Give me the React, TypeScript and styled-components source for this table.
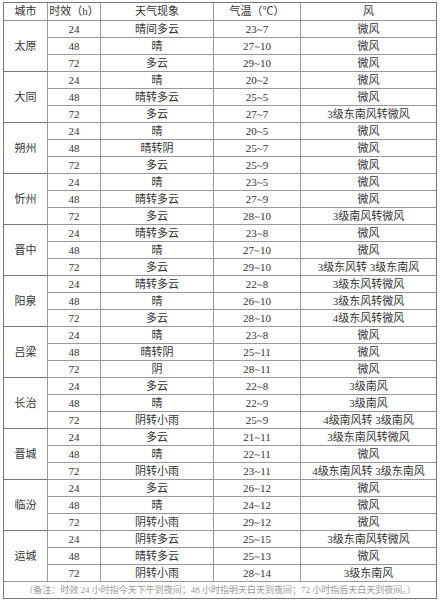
import React from 'react';
import styled, { createGlobalStyle } from 'styled-components';

const GlobalStyle = createGlobalStyle`
	body {
		margin: 0;
		background: #fff;
	}
`;

const Page = styled.div`
	padding: 2px 0 0 3px;
	font-family: "Liberation Serif", "Noto Sans CJK SC", serif;
	color: #333;
`;

const Table = styled.div`
	display: grid;
	grid-template-columns: 44px 53px 113px 87px 136px;
	grid-template-rows: 18px;
	grid-auto-rows: 17px;
	width: 434px;
	border-top: 1px solid #777;
	border-left: 1px solid #777;
	box-sizing: border-box;
`;

const Cell = styled.div<{ $last?: boolean }>`
	display: flex;
	align-items: center;
	justify-content: center;
	border-right: 1px solid ${(p) => (p.$last ? '#777' : '#999')};
	border-bottom: 1px solid #999;
	font-size: 11px;
	line-height: 1;
	white-space: nowrap;
`;

const CityCell = styled(Cell)`
	grid-row: span 3;
	border-bottom-color: #777;
`;

const Note = styled(Cell)`
	grid-column: 1 / -1;
	border-right-color: #777;
	border-bottom-color: #777;
	border-top: 1px solid #999;
	margin-top: -1px;
	font-size: 9px;
	color: #999;
`;

type Row = [string, string, string];

interface ICity {
	name: string;
	rows: Row[];
}

const hours = ['24', '48', '72'];

const cities: ICity[] = [
	{ name: '太原', rows: [['晴间多云', '23~7', '微风'], ['晴', '27~10', '微风'], ['多云', '29~10', '微风']] },
	{ name: '大同', rows: [['晴', '20~2', '微风'], ['晴转多云', '25~5', '微风'], ['多云', '27~7', '3级东南风转微风']] },
	{ name: '朔州', rows: [['晴', '20~5', '微风'], ['晴转阴', '25~7', '微风'], ['多云', '25~9', '微风']] },
	{ name: '忻州', rows: [['晴', '23~5', '微风'], ['晴转多云', '27~9', '微风'], ['多云', '28~10', '3级南风转微风']] },
	{ name: '晋中', rows: [['晴转多云', '23~8', '微风'], ['晴', '27~10', '微风'], ['多云', '29~10', '3级东风转 3级东南风']] },
	{ name: '阳泉', rows: [['晴转多云', '22~8', '3级东风转微风'], ['晴', '26~10', '3级东风转微风'], ['多云', '28~10', '4级东风转微风']] },
	{ name: '吕梁', rows: [['晴', '23~8', '微风'], ['晴转阴', '25~11', '微风'], ['阴', '28~11', '微风']] },
	{ name: '长治', rows: [['多云', '22~8', '3级南风'], ['晴', '22~9', '3级南风'], ['阴转小雨', '25~9', '4级南风转 3级南风']] },
	{ name: '晋城', rows: [['多云', '21~11', '3级东南风转微风'], ['晴', '22~11', '微风'], ['阴转小雨', '23~11', '4级东南风转 3级东南风']] },
	{ name: '临汾', rows: [['多云', '26~12', '微风'], ['晴', '24~12', '微风'], ['阴转小雨', '29~12', '微风']] },
	{ name: '运城', rows: [['阴转多云', '25~15', '3级东南风转微风'], ['晴转多云', '25~13', '微风'], ['阴转小雨', '28~14', '3级东南风']] },
];

const App = () => (
	<Page>
		<GlobalStyle />
		<Table>
			<Cell>城市</Cell>
			<Cell>时效（h）</Cell>
			<Cell>天气现象</Cell>
			<Cell>气温（℃）</Cell>
			<Cell $last>风</Cell>

			{cities.map((city) => (
				<React.Fragment key={city.name}>
					<CityCell>{city.name}</CityCell>
					{city.rows.map(([weather, temp, wind], i) => (
						<React.Fragment key={hours[i]}>
							<Cell>{hours[i]}</Cell>
							<Cell>{weather}</Cell>
							<Cell>{temp}</Cell>
							<Cell $last>{wind}</Cell>
						</React.Fragment>
					))}
				</React.Fragment>
			))}

			<Note>（备注：时效 24 小时指今天下午到夜间；48 小时指明天白天到夜间；72 小时指后天白天到夜间。）</Note>
		</Table>
	</Page>
);

export default App;
